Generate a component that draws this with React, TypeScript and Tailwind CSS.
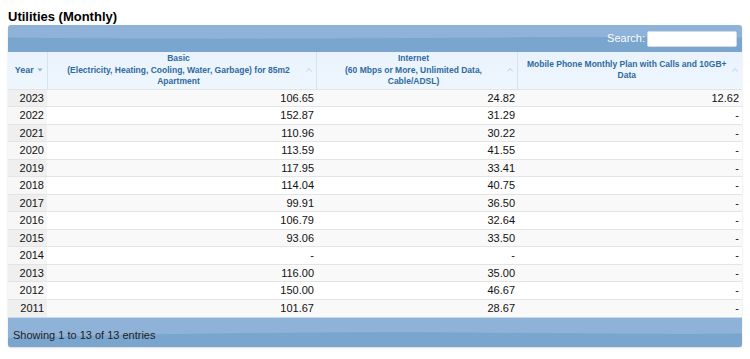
import React from "react";

type Row = { year: string; basic: string; internet: string; mobile: string };

const rows: Row[] = [
  { year: "2023", basic: "106.65", internet: "24.82", mobile: "12.62" },
  { year: "2022", basic: "152.87", internet: "31.29", mobile: "-" },
  { year: "2021", basic: "110.96", internet: "30.22", mobile: "-" },
  { year: "2020", basic: "113.59", internet: "41.55", mobile: "-" },
  { year: "2019", basic: "117.95", internet: "33.41", mobile: "-" },
  { year: "2018", basic: "114.04", internet: "40.75", mobile: "-" },
  { year: "2017", basic: "99.91", internet: "36.50", mobile: "-" },
  { year: "2016", basic: "106.79", internet: "32.64", mobile: "-" },
  { year: "2015", basic: "93.06", internet: "33.50", mobile: "-" },
  { year: "2014", basic: "-", internet: "-", mobile: "-" },
  { year: "2013", basic: "116.00", internet: "35.00", mobile: "-" },
  { year: "2012", basic: "150.00", internet: "46.67", mobile: "-" },
  { year: "2011", basic: "101.67", internet: "28.67", mobile: "-" },
];

function Wave({ flip }: { flip?: boolean }) {
  return (
    <svg
      className="absolute inset-0 h-full w-full"
      viewBox="0 0 734 28"
      preserveAspectRatio="none"
    >
      <rect width="734" height="28" fill="#8fb3d8" />
      {flip ? (
        <path d="M0 19 C 150 15, 300 13, 450 14 S 650 16, 734 15 L734 28 L0 28 Z" fill="#79a5cf" />
      ) : (
        <path d="M0 13 C 150 15, 350 14, 500 13 S 680 13, 734 13 L734 28 L0 28 Z" fill="#79a5cf" />
      )}
    </svg>
  );
}

function SortIcon({ down }: { down?: boolean }) {
  return (
    <svg width="6" height="4" viewBox="0 0 6 4" className="shrink-0">
      {down ? (
        <path d="M0.5 0.5 L3 3.5 L5.5 0.5 Z" fill="#8fb0cf" />
      ) : (
        <path d="M0.5 3.5 L3 0.5 L5.5 3.5" fill="none" stroke="#b9cde0" strokeWidth="0.9" />
      )}
    </svg>
  );
}

function Th({ children, down, className }: { children: React.ReactNode; down?: boolean; className?: string }) {
  return (
    <th className={"border-r border-[#d3e3f2] p-0 align-middle font-bold " + (className ?? "")}>
      <div className="flex items-center px-[4px]">
        <div className="flex-1 text-center leading-[11.5px]">{children}</div>
        <SortIcon down={down} />
      </div>
    </th>
  );
}

export default function App() {
  return (
    <div className="min-h-[359px] bg-white pt-[8px] font-['Liberation_Sans',Arial,sans-serif] text-[#111]">
      <h2 className="px-[8px] text-[13px] font-bold leading-[17px] text-black">Utilities (Monthly)</h2>
      <div className="mx-[8px] overflow-hidden rounded-[3px] shadow-[0_1px_2px_rgba(0,0,0,0.15)]">
        <div className="relative flex h-[27px] items-center justify-end pr-[5px]">
          <Wave />
          <label className="relative flex items-center gap-[2px] text-[11px] text-white">
            Search:
            <input className="h-[16px] w-[90px] rounded-[2px] border border-[#d0dce8] bg-white" />
          </label>
        </div>
        <table className="w-[734px] table-fixed border-collapse">
          <colgroup>
            <col className="w-[39px]" />
            <col className="w-[269px]" />
            <col className="w-[201px]" />
            <col className="w-[225px]" />
          </colgroup>
          <thead>
            <tr className="h-[37px] bg-[linear-gradient(#eaf3fc,#eef6fe)] text-[8.5px] text-[#2f6aa0]">
              <Th down>
                <span className="text-[9px]">Year</span>
              </Th>
              <Th>
                Basic
                <br />
                (Electricity, Heating, Cooling, Water, Garbage) for 85m2
                <br />
                Apartment
              </Th>
              <Th>
                Internet
                <br />
                (60 Mbps or More, Unlimited Data,
                <br />
                Cable/ADSL)
              </Th>
              <Th className="border-r-0">
                Mobile Phone Monthly Plan with Calls and 10GB+
                <br />
                Data
              </Th>
            </tr>
          </thead>
          <tbody className="text-[11px]">
            {rows.map((r, i) => (
              <tr
                key={r.year}
                className={"h-[17.5px] border-t border-[#e4e4e4] " + (i % 2 === 0 ? "bg-[#f9f9f9]" : "bg-white")}
              >
                <td className={"px-[3px] text-right " + (i % 2 === 0 ? "bg-[#efefef]" : "bg-[#f7f7f7]")}>{r.year}</td>
                <td className="px-[2px] text-right">{r.basic}</td>
                <td className="px-[2px] text-right">{r.internet}</td>
                <td className="px-[3px] text-right">{r.mobile}</td>
              </tr>
            ))}
          </tbody>
        </table>
        <div className="relative flex h-[30px] items-center border-t border-[#c9d9ea] pl-[5px] pt-[6px]">
          <Wave flip />
          <span className="relative text-[11px] text-[#222]">Showing 1 to 13 of 13 entries</span>
        </div>
      </div>
    </div>
  );
}
